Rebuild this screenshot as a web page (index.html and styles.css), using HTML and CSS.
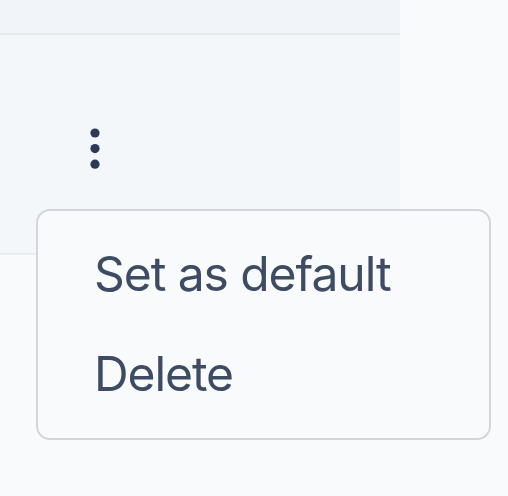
FILE: index.html
```html
<!DOCTYPE html>
<html lang="en">
<head>
<meta charset="utf-8">
<title>Row actions</title>
<link rel="stylesheet" href="styles.css">
</head>
<body>
<div class="table">
  <div class="table-head"></div>
  <div class="table-row">
    <button class="kebab" aria-label="Actions">
      <svg width="10" height="46" viewBox="0 0 10 46"><circle cx="5" cy="5" r="4.6"/><circle cx="5" cy="20.6" r="4.6"/><circle cx="5" cy="36.2" r="4.6"/></svg>
    </button>
  </div>
</div>
<div class="menu">
  <div class="menu-item">Set as default</div>
  <div class="menu-item">Delete</div>
</div>
</body>
</html>
```
FILE: styles.css
```css
html, body {
  margin: 0;
  height: 100%;
}
body {
  position: relative;
  overflow: hidden;
  background: #f9fafc;
  font-family: Inter, "Liberation Sans", sans-serif;
}
.table {
  width: 400px;
}
.table-head {
  height: 33px;
  background: #f1f4f9;
  border-bottom: 2px solid #e4e8ec;
}
.table-row {
  height: 218px;
  background: #f3f7fa;
  border-bottom: 2px solid #e8ebef;
  display: flex;
  align-items: flex-start;
  padding-left: 90px;
}
.kebab {
  margin-top: 93px;
  padding: 0;
  border: 0;
  background: none;
  line-height: 0;
  fill: #2a3a58;
  filter: blur(0.7px);
}
.menu {
  position: absolute;
  left: 36px;
  top: 209px;
  width: 451px;
  height: 214px;
  padding-top: 13px;
  background: #f9fafc;
  border: 2px solid #d2d6db;
  border-radius: 14px;
  filter: blur(0.6px);
}
.menu-item {
  height: 100px;
  line-height: 100px;
  padding-left: 56px;
  font-size: 48px;
  letter-spacing: -1.07px;
  color: #3e4c63;
}
```
